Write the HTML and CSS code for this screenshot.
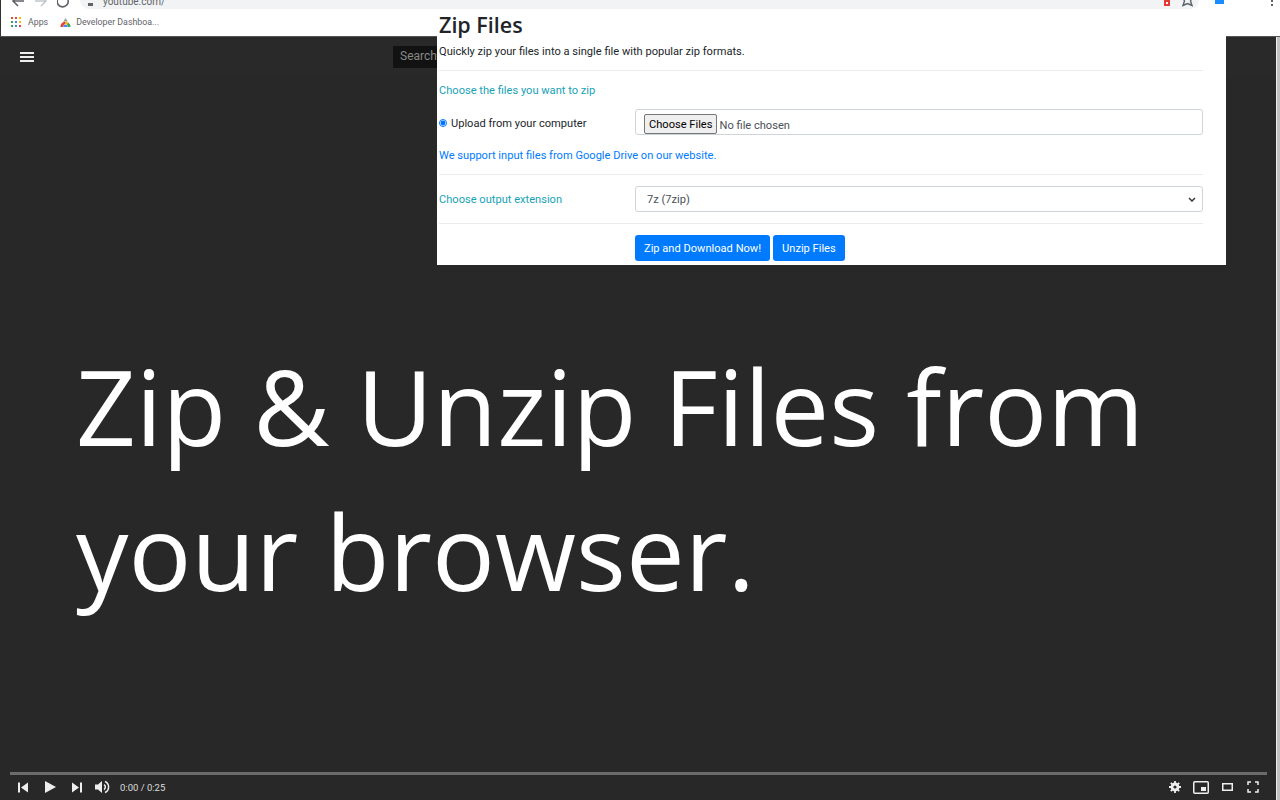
FILE: index.html
```html
<!DOCTYPE html>
<html lang="en">
<head>
    <meta charset="UTF-8">
    <meta name="viewport" content="width=device-width, initial-scale=1.0">
    <title>Zip Files</title>
    <link rel="stylesheet" href="styles.css">
</head>
<body>
    <div class="browser">
        <div class="toolbar">
            <div class="nav-icons">
                <svg width="14" height="10" viewBox="0 0 14 10"><path d="M13 1H3M7 -4L2 1l5 5" fill="none" stroke="#5f6368" stroke-width="1.6"/></svg>
                <svg width="14" height="10" viewBox="0 0 14 10"><path d="M1 1h10M7 -4l5 5-5 5" fill="none" stroke="#c4c7cb" stroke-width="1.6"/></svg>
                <svg width="14" height="10" viewBox="0 0 14 10"><path d="M12 0a5.500 5.500 0 1 1-2-3" transform="translate(-1 0)" fill="none" stroke="#5f6368" stroke-width="1.6"/></svg>
            </div>
            <div class="omnibox">
                <span class="lock"></span>
                <span class="url">youtube.com/</span>
                <span class="spacer"></span>
                <span class="ext-red"></span>
                <svg class="star" width="11" height="9" viewBox="0 0 11 9"><path d="M1 0l1.500 3L1 7.500l4.500-2 4.500 2L8.500 3 10 0" fill="none" stroke="#5f6368" stroke-width="1.400"/></svg>
            </div>
            <div class="profile"><span class="avatar"></span></div>
            <div class="menu-dots"><i></i><i></i></div>
        </div>
        <div class="bookmarks">
            <svg class="apps" width="10" height="10" viewBox="0 0 10 10">
                <rect x="0" y="0" width="2" height="2" fill="#ea4335"/><rect x="4" y="0" width="2" height="2" fill="#ea4335"/><rect x="8" y="0" width="2" height="2" fill="#fbbc05"/>
                <rect x="0" y="4" width="2" height="2" fill="#34a853"/><rect x="4" y="4" width="2" height="2" fill="#4285f4"/><rect x="8" y="4" width="2" height="2" fill="#fbbc05"/>
                <rect x="0" y="8" width="2" height="2" fill="#34a853"/><rect x="4" y="8" width="2" height="2" fill="#4285f4"/><rect x="8" y="8" width="2" height="2" fill="#ea4335"/>
            </svg>
            <span class="bm-label">Apps</span>
            <svg class="dash" width="11" height="11" viewBox="0 0 12 12">
                <path d="M3.500 5L6 1l2.500 4z" fill="#9aa0a6"/>
                <path d="M0.500 11a5.500 5.500 0 0 1 5.500-6v3a2.500 2.500 0 0 0-2.500 3z" fill="#ea4335"/>
                <path d="M6 5a5.500 5.500 0 0 1 3 1l-1.500 2.500A2.500 2.500 0 0 0 6 8z" fill="#fbbc05"/>
                <path d="M9 6a5.500 5.500 0 0 1 2.500 5h-3A2.500 2.500 0 0 0 7.500 8.500z" fill="#34a853"/>
                <path d="M3.500 11a2.500 2.500 0 0 1 5 0z" fill="#4285f4"/>
            </svg>
            <span class="bm-label">Developer Dashboa...</span>
        </div>
    </div>

    <div class="player">
        <div class="yt-top">
            <div class="burger"><i></i><i></i><i></i></div>
            <div class="yt-search">Search</div>
        </div>
        <div class="hero">
            <h1>Zip &amp; Unzip Files from<br>your browser.</h1>
        </div>
        <div class="controls">
            <div class="progress"></div>
            <div class="ctrl-row">
                <svg class="ctrl" width="10" height="11" viewBox="0 0 10 11"><path d="M0 0.500h2v10H0zM10 0.500v10L3 5.500z" fill="#eee"/></svg>
                <svg class="ctrl play" width="13" height="14" viewBox="0 0 13 14"><path d="M1 1l11 6-11 6z" fill="#eee"/></svg>
                <svg class="ctrl next" width="10" height="11" viewBox="0 0 10 11"><path d="M8 0.500h2v10H8zM0 0.500v10l7-5z" fill="#eee"/></svg>
                <svg class="ctrl vol" width="15" height="14" viewBox="0 0 15 14"><path d="M0 4.500h3L7 1v12L3 9.500H0z" fill="#eee"/><path d="M9 4.500a3 3 0 0 1 0 5" fill="none" stroke="#eee" stroke-width="1.500"/><path d="M10 1.500a6 6 0 0 1 0 11" fill="none" stroke="#eee" stroke-width="1.500"/></svg>
                <span class="time">0:00 / 0:25</span>
                <span class="spacer"></span>
                <svg class="ctrl gear" width="12" height="12" viewBox="0 0 12 12"><circle cx="6" cy="6" r="3.300" fill="none" stroke="#eee" stroke-width="2.200"/><path d="M6 0v12M0 6h12M1.800 1.800l8.400 8.400M10.200 1.800l-8.400 8.400" stroke="#eee" stroke-width="1.800"/><circle cx="6" cy="6" r="1.600" fill="#282828"/></svg>
                <svg class="ctrl mini" width="16" height="13" viewBox="0 0 16 13"><rect x="0.750" y="0.750" width="14.500" height="11.500" rx="1" fill="none" stroke="#eee" stroke-width="1.500"/><rect x="8" y="6" width="5" height="4" fill="#eee"/></svg>
                <svg class="ctrl theater" width="11" height="8" viewBox="0 0 11 8"><rect x="0.750" y="0.750" width="9.500" height="6.500" fill="none" stroke="#eee" stroke-width="1.500"/></svg>
                <svg class="ctrl" width="12" height="12" viewBox="0 0 12 12"><path d="M1 4V1h3M8 1h3v3M11 8v3H8M4 11H1V8" fill="none" stroke="#eee" stroke-width="1.500"/></svg>
            </div>
        </div>
        <div class="scrollbar"></div>
    </div>

    <div class="zip-panel">
        <h2>Zip Files</h2>
        <p class="lead">Quickly zip your files into a single file with popular zip formats.</p>
        <hr>
        <div class="label-teal choose-label">Choose the files you want to zip</div>
        <div class="form-row upload-row">
            <label class="row-label"><input type="radio" checked>Upload from your computer</label>
            <div class="form-box file-box"><span class="file-btn">Choose Files</span><span class="file-none">No file chosen</span></div>
        </div>
        <a class="drive-link" href="#">We support input files from Google Drive on our website.</a>
        <hr>
        <div class="form-row">
            <div class="row-label label-teal">Choose output extension</div>
            <div class="form-box select-box">
                <span>7z (7zip)</span>
                <svg width="8" height="5" viewBox="0 0 8 5"><path d="M1 1l3 3 3-3" fill="none" stroke="#343a40" stroke-width="1.500"/></svg>
            </div>
        </div>
        <hr>
        <div class="form-row">
            <div class="row-label"></div>
            <div class="btn-group">
                <span class="btn">Zip and Download Now!</span>
                <span class="btn">Unzip Files</span>
            </div>
        </div>
    </div>
</body>
</html>
```

FILE: styles.css
```css
* {
    box-sizing: border-box;
}
html, body {
    height: 100%;
}
body {
    margin: 0;
    height: 800px;
    overflow: hidden;
    display: flex;
    flex-direction: column;
    background: #282828;
    font-family: "Open Sans", sans-serif;
}
.spacer {
    flex: 1;
}

/* browser bar */
.browser {
    height: 37px;
    background: #fff;
    border-left: 1px solid #333;
    border-bottom: 1px solid #555;
}
.toolbar {
    height: 10px;
    display: flex;
    overflow: hidden;
}
.nav-icons {
    width: 79px;
    padding-left: 10px;
    display: flex;
    gap: 9px;
}
.omnibox {
    width: 1119px;
    height: 9px;
    background: #f1f3f4;
    border-radius: 0 0 12px 12px;
    display: flex;
    align-items: flex-end;
    padding: 0 5px 3px 8px;
}
.lock {
    width: 5px;
    height: 3px;
    background: #5f6368;
    margin-right: 10px;
}
.url {
    font-family: Roboto, sans-serif;
    font-size: 10px;
    line-height: 12px;
    color: #5f6368;
    margin-bottom: -2px;
}
.ext-red {
    width: 6px;
    height: 6px;
    border: 2px solid #e53935;
    margin-right: 12px;
    background: #fff;
}
.star {
    margin-bottom: -1px;
    margin-right: 1px;
}
.profile {
    width: 72px;
    padding-left: 16px;
}
.avatar {
    display: block;
    width: 9px;
    height: 4px;
    background: #1a8cff;
}
.menu-dots {
    display: flex;
    flex-direction: column;
    gap: 2px;
}
.menu-dots i {
    display: block;
    width: 2px;
    height: 2px;
    background: #5f6368;
}
.bookmarks {
    height: 24px;
    display: flex;
    align-items: center;
    padding-left: 10px;
}
.apps {
    margin-right: 7px;
}
.dash {
    margin-left: 12px;
    margin-right: 5px;
}
.bm-label {
    font-family: Roboto, sans-serif;
    font-size: 8.8px;
    color: #5f6368;
}

/* video player */
.player {
    flex: 1;
    display: flex;
    flex-direction: column;
    position: relative;
}
.yt-top {
    height: 39px;
    display: flex;
    align-items: center;
    background: #292929;
}
.burger {
    width: 44px;
    height: 39px;
    padding-left: 20px;
    display: flex;
    flex-direction: column;
    justify-content: center;
    gap: 2px;
}
.burger i {
    display: block;
    width: 14px;
    height: 2px;
    background: #eee;
}
.yt-search {
    margin-left: 349px;
    width: 60px;
    height: 22px;
    background: #121212;
    padding-left: 7px;
    font-family: Roboto, sans-serif;
    font-size: 12px;
    line-height: 21px;
    color: #888;
}
.hero {
    flex: 1;
    padding: 257px 0 0 76px;
}
.hero h1 {
    margin: 0;
    font-weight: 400;
    font-size: 104.6px;
    line-height: 145px;
    color: #fff;
}
.controls {
    padding: 0 13px 1px 10px;
}
.progress {
    height: 3px;
    background: #6b6b6b;
}
.ctrl-row {
    height: 24px;
    display: flex;
    align-items: center;
    padding: 0 8px;
}
.ctrl {
    flex: none;
}
.play {
    margin-left: 16px;
}
.next {
    margin-left: 15px;
}
.vol {
    margin-left: 13px;
}
.time {
    margin-left: 10px;
    font-family: Roboto, sans-serif;
    font-size: 9.5px;
    color: #ddd;
}
.gear {
    margin-right: 12px;
}
.mini {
    margin-right: 13px;
}
.theater {
    margin-right: 14px;
}
.scrollbar {
    position: absolute;
    top: 0;
    right: 0;
    bottom: 0;
    width: 4px;
    background: #c1c1c1;
    border-left: 1px solid #f0f0f0;
}

/* zip panel lies over the video */
.zip-panel {
    position: absolute;
    left: 437px;
    top: 9px;
    width: 789px;
    height: 256px;
    background: #fff;
    padding: 2px 23px 0 2px;
    overflow: hidden;
    font-family: Roboto, sans-serif;
    font-size: 11.1px;
    color: #212529;
}
.zip-panel h2 {
    margin: 0;
    font-family: "Open Sans", sans-serif;
    font-size: 21.5px;
    font-weight: 600;
    line-height: 27px;
}
.lead {
    margin: 5px 0 0;
    line-height: 18px;
}
.zip-panel hr {
    margin: 9px 0 0;
    border: 0;
    border-top: 1px solid #e9ecef;
}
.label-teal {
    color: #17a2b8;
}
.choose-label {
    margin-top: 12px;
    line-height: 16px;
}
.form-row {
    display: flex;
    align-items: center;
}
.upload-row {
    margin-top: 10px;
}
.row-label {
    width: 196px;
    flex: none;
    display: flex;
    align-items: center;
}
.upload-row .row-label {
    padding-top: 2px;
}
.row-label input {
    width: 8px;
    height: 8px;
    margin: 0 4px 0 0;
}
.form-box {
    flex: 1;
    height: 26px;
    border: 1px solid #ced4da;
    border-radius: 3px;
    display: flex;
    align-items: center;
}
.file-box {
    padding-left: 8px;
}
.file-btn {
    height: 20px;
    margin-top: 4px;
    padding: 0 4px;
    background: #efefef;
    border: 1px solid #767676;
    border-radius: 2px;
    line-height: 20px;
    color: #000;
}
.file-none {
    margin: 6px 0 0 2px;
    color: #495057;
}
.drive-link {
    display: block;
    margin-top: 13px;
    line-height: 16px;
    color: #007bff;
    text-decoration: none;
}
.form-row + hr {
    margin-top: 11px;
}
.drive-link + hr {
    margin-top: 10px;
}
.zip-panel hr + .form-row {
    margin-top: 11px;
}
.select-box {
    justify-content: space-between;
    padding: 0 6px 0 11px;
    color: #495057;
}
.btn-group {
    display: flex;
    gap: 3px;
}
.btn {
    height: 26px;
    padding: 0 9px;
    background: #007bff;
    border-radius: 3px;
    color: #fff;
    line-height: 28px;
}
```
